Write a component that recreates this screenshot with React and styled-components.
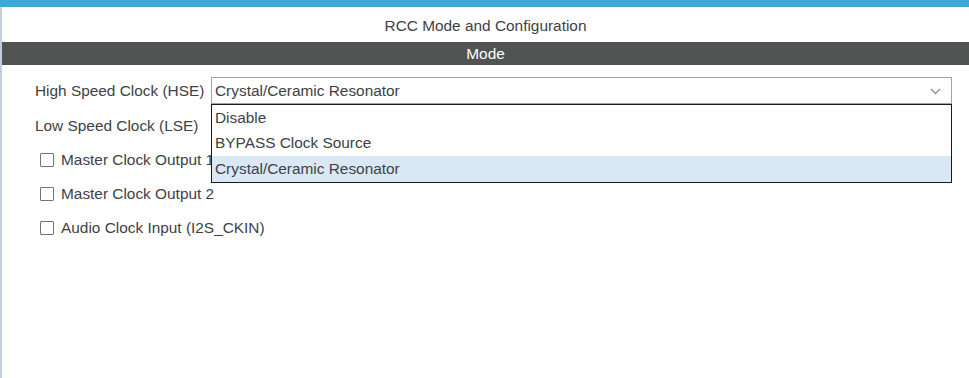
import React from 'react'
import styled, { createGlobalStyle } from 'styled-components'

const GlobalStyle = createGlobalStyle`
  html, body {
    margin: 0;
    padding: 0;
    height: 100%;
    background: #ffffff;
  }
  #root {
    height: 100%;
  }
`

const options = ['Disable', 'BYPASS Clock Source', 'Crystal/Ceramic Resonator']
const checks = ['Master Clock Output 1', 'Master Clock Output 2', 'Audio Clock Input (I2S_CKIN)']

const App = () => (
  <>
    <GlobalStyle />
    <Page>
      <TopBar />
      <Panel>
        <Title>RCC Mode and Configuration</Title>
        <SectionBar>Mode</SectionBar>
        <Form>
          <FieldRow $space={8}>
            <Label>High Speed Clock (HSE)</Label>
            <SelectWrap>
              <Select>
                <span>Crystal/Ceramic Resonator</span>
                <Chevron width="11" height="7" viewBox="0 0 11 7">
                  <path d="M1 1 L5.5 5.5 L10 1" fill="none" stroke="#8a8f93" strokeWidth="1.3" />
                </Chevron>
              </Select>
              <Menu>
                {options.map((o, i) => (
                  <MenuItem key={o} $active={i === 2}>
                    {o}
                  </MenuItem>
                ))}
              </Menu>
            </SelectWrap>
          </FieldRow>
          <FieldRow $space={4}>
            <Label>Low Speed Clock (LSE)</Label>
          </FieldRow>
          {checks.map((c) => (
            <CheckRow key={c}>
              <Box />
              <CheckText>{c}</CheckText>
            </CheckRow>
          ))}
        </Form>
      </Panel>
    </Page>
  </>
)

const Page = styled.div`
  display: flex;
  flex-direction: column;
  height: 100%;
  font-family: 'Liberation Sans', Arial, sans-serif;
  color: #3d4247;
`

const TopBar = styled.div`
  height: 7px;
  background: #3aa9dc;
`

const Panel = styled.div`
  flex: 1;
  border-left: 2px solid #c3ced8;
  display: flex;
  flex-direction: column;
`

const Title = styled.div`
  height: 35px;
  display: flex;
  align-items: center;
  justify-content: center;
  font-size: 15.4px;
  padding-top: 2px;
  box-sizing: border-box;
`

const SectionBar = styled.div`
  height: 23px;
  background: #525453;
  color: #ffffff;
  font-size: 15.4px;
  display: flex;
  align-items: center;
  justify-content: center;
`

const Form = styled.div`
  padding: 12px 17px 0 33px;
  display: flex;
  flex-direction: column;
`

const FieldRow = styled.div`
  display: grid;
  grid-template-columns: 176px 1fr;
  align-items: center;
  height: 27px;
  margin-bottom: ${(p) => p.$space}px;
`

const Label = styled.div`
  font-size: 15.4px;
  white-space: nowrap;
`

const SelectWrap = styled.div`
  position: relative;
`

const Select = styled.div`
  height: 27px;
  box-sizing: border-box;
  border: 1px solid #9ca2a6;
  display: flex;
  align-items: center;
  justify-content: space-between;
  padding: 0 10px 0 3px;
  font-size: 15.4px;
`

const Chevron = styled.svg`
  display: block;
  margin-top: 1px;
`

const Menu = styled.div`
  position: absolute;
  top: 27px;
  left: 0;
  right: 0;
  background: #ffffff;
  border: 1px solid #1a1a1a;
  z-index: 2;
`

const MenuItem = styled.div`
  height: 25.5px;
  display: flex;
  align-items: center;
  padding-left: 3px;
  font-size: 15.4px;
  background: ${(p) => (p.$active ? '#dae8f5' : 'transparent')};
`

const CheckRow = styled.div`
  display: flex;
  align-items: center;
  height: 34px;
  padding-left: 5px;
`

const Box = styled.div`
  width: 14px;
  height: 14px;
  box-sizing: border-box;
  border: 1px solid #747474;
  border-radius: 1px;
  margin-right: 7px;
  background: #ffffff;
`

const CheckText = styled.div`
  font-size: 15.4px;
`

export default App
